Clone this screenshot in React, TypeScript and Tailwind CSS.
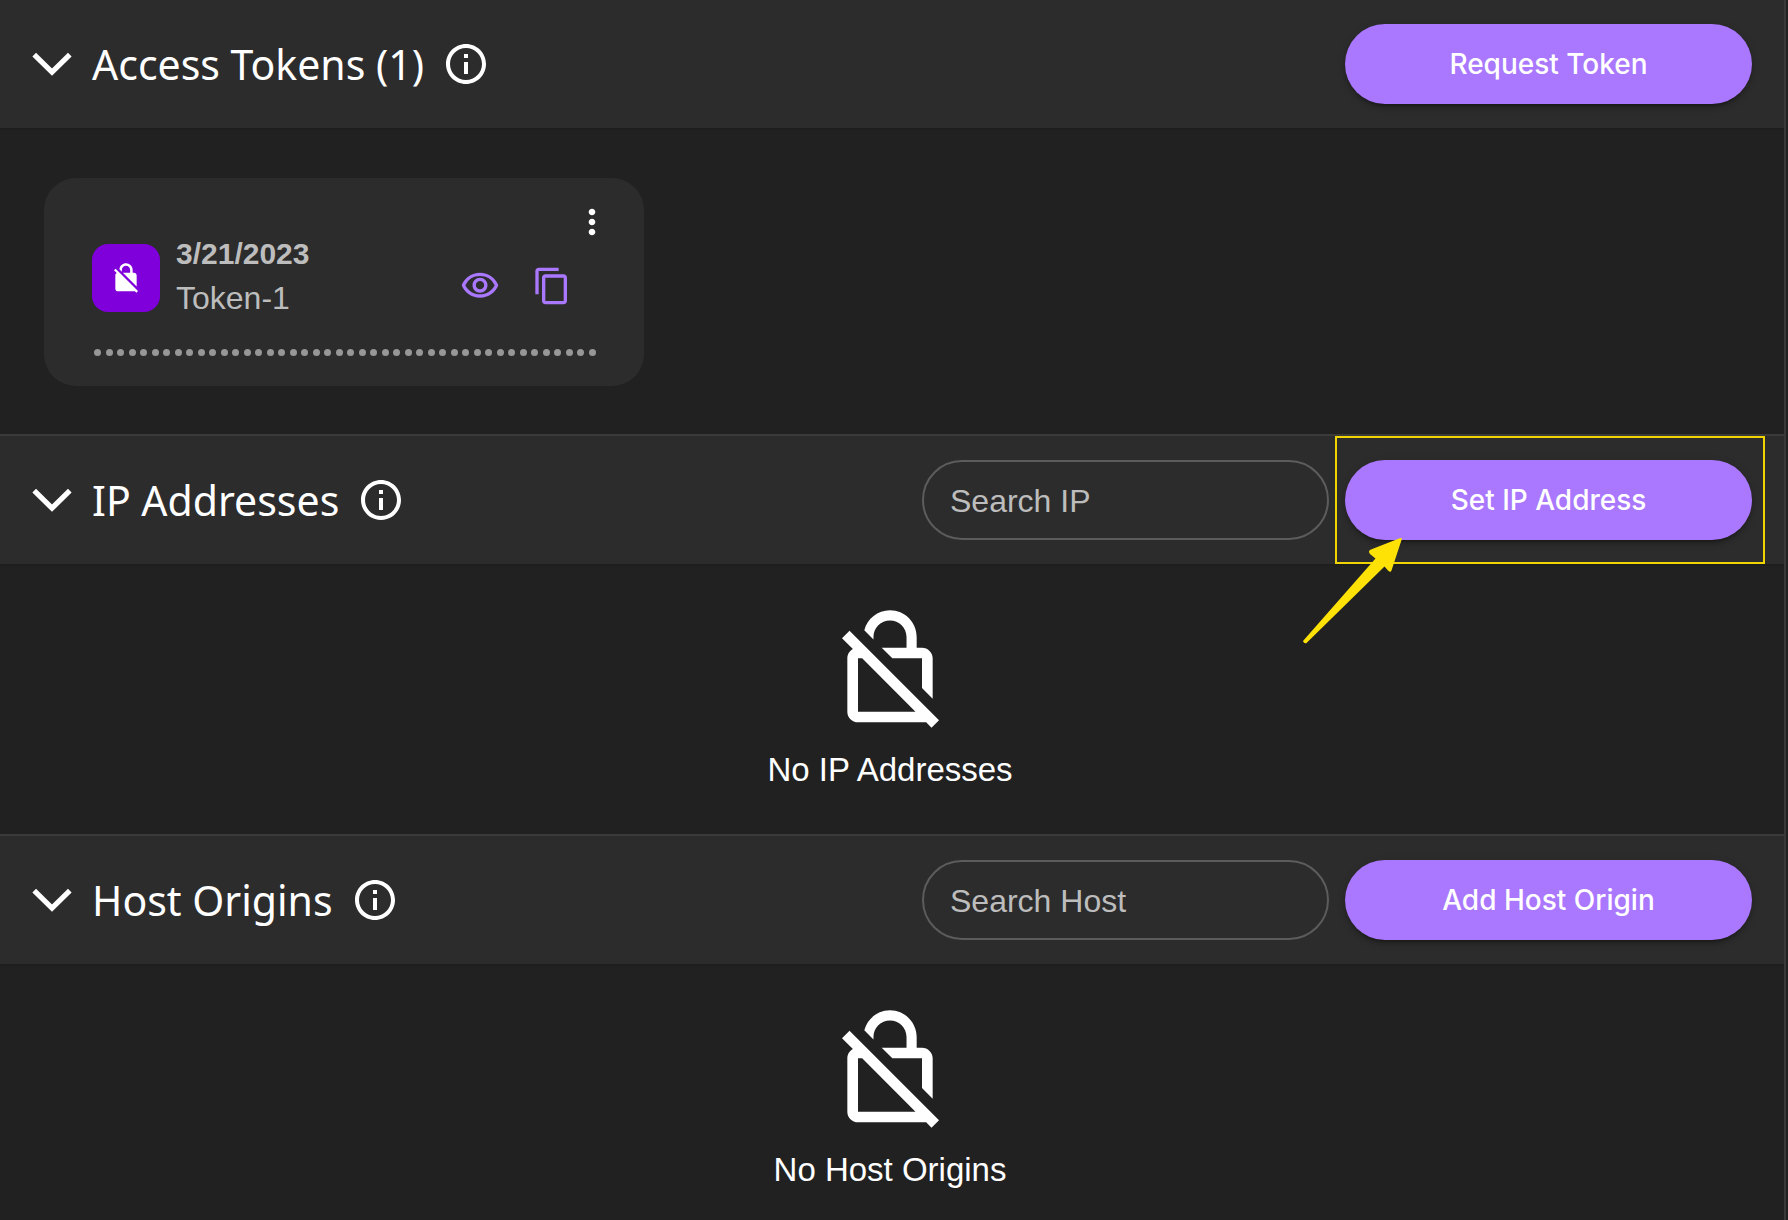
import React from "react";
import {
  MdInfoOutline,
  MdMoreVert,
  MdNoEncryption,
  MdOutlineContentCopy,
  MdOutlineNoEncryption,
  MdOutlineVisibility,
} from "react-icons/md";

const TOKEN_LENGTH = 44;

function Chevron() {
  return (
    <svg viewBox="0 0 40 24" className="h-6 w-10" fill="none" aria-hidden="true">
      <path d="M2.2 2.6 20 20.2 37.8 2.6" stroke="#fff" strokeWidth="5.2" />
    </svg>
  );
}

function PillButton({ children }: { children: React.ReactNode }) {
  return (
    <button
      type="button"
      className="h-20 w-full rounded-full bg-[#aa77ff] font-['Inter',sans-serif] text-[28px] font-medium text-white shadow-[0_6px_2px_-4px_rgba(0,0,0,0.2),0_4px_4px_rgba(0,0,0,0.14),0_2px_10px_rgba(0,0,0,0.12)]"
    >
      {children}
    </button>
  );
}

function Callout() {
  return (
    <>
      <div className="pointer-events-none absolute -top-6 -right-[13px] -bottom-6 -left-2.5 border-2 border-[#f0d503]" />
      <svg
        viewBox="0 0 104 110"
        className="pointer-events-none absolute top-[76px] -left-11 h-[110px] w-[104px]"
        aria-hidden="true"
      >
        <path
          d="M101 2.5 90.5 34.5Q89.5 37 87 34.500L83.500 30.500 5.500 107Q3 108 2 105L74.500 22.500 69 18Q66.500 15 70 13.500L98 2.500Q100.500 1.500 101 2.500Z"
          fill="#ffe205"
        />
      </svg>
    </>
  );
}

function Section({
  title,
  action,
  search,
  highlighted = false,
  first = false,
  children,
}: {
  title: string;
  action: string;
  search?: string;
  highlighted?: boolean;
  first?: boolean;
  children: React.ReactNode;
}) {
  return (
    <section className={first ? "" : "border-t-2 border-[#3a3a3a]"}>
      <header className="flex items-center justify-between gap-4 border-b-2 border-[#1e1e1e] bg-[#2c2c2c] px-8 py-6">
        <div className="flex items-center">
          <button type="button" aria-label={`Collapse ${title}`} className="mr-5">
            <Chevron />
          </button>
          <h2 className="mr-[18px] font-['Noto_Sans',sans-serif] text-[41px] leading-[56px] whitespace-nowrap text-white">
            {title}
          </h2>
          <button type="button" aria-label={`About ${title}`}>
            <MdInfoOutline className="size-12" />
          </button>
        </div>
        <div className="flex gap-4">
          {search && (
            <input
              type="text"
              aria-label={search}
              placeholder={search}
              className="h-20 w-[407px] rounded-full border-2 border-[#5c5c5c] bg-transparent px-[26px] pt-0.5 text-[32px] text-white outline-none placeholder:text-[#bdbdbd]"
            />
          )}
          <div className="relative w-[407px]">
            <PillButton>{action}</PillButton>
            {highlighted && <Callout />}
          </div>
        </div>
      </header>
      {children}
    </section>
  );
}

function EmptyState({ label }: { label: string }) {
  return (
    <div className="flex flex-col items-center gap-[13px] pt-[39px] pr-1 pb-10">
      <MdOutlineNoEncryption className="size-32" />
      <p className="text-[33px] leading-[48px]">{label}</p>
    </div>
  );
}

function TokenCard() {
  return (
    <article className="relative h-[208px] w-[600px] rounded-[32px] bg-[#2c2c2c] px-12 pt-[54px]">
      <button type="button" aria-label="More options" className="absolute top-6 right-8">
        <MdMoreVert className="size-10" />
      </button>
      <div className="flex items-start">
        <div className="mt-3 mr-4 flex size-[68px] items-center justify-center rounded-2xl bg-[#8000dc]">
          <MdNoEncryption className="size-8" />
        </div>
        <div className="flex-1 text-[#bdbdbd]">
          <p className="text-[30px] leading-[44px] font-bold">3/21/2023</p>
          <p className="text-[32px] leading-[44px]">Token-1</p>
        </div>
        <div className="mt-[34px] mr-6 flex gap-8 text-[#aa77ff]">
          <button type="button" aria-label="Show token">
            <MdOutlineVisibility className="size-10" />
          </button>
          <button type="button" aria-label="Copy token">
            <MdOutlineContentCopy className="size-10" />
          </button>
        </div>
      </div>
      <div
        role="img"
        aria-label="Hidden token value"
        className="mt-3 flex h-10 items-center justify-between pl-0.5"
      >
        {Array.from({ length: TOKEN_LENGTH }, (_, i) => (
          <span key={i} className="size-[7px] rounded-full bg-[#979797]" />
        ))}
      </div>
    </article>
  );
}

export default function App() {
  return (
    <main className="min-h-screen bg-[#212121] pr-0.5 font-['Liberation_Sans',Arial,sans-serif] text-white">
      <div className="min-h-screen border-r-2 border-[#3a3a3a]">
        <Section title="Access Tokens (1)" action="Request Token" first>
          <div className="px-11 py-12">
            <TokenCard />
          </div>
        </Section>
        <Section title="IP Addresses" action="Set IP Address" search="Search IP" highlighted>
          <EmptyState label="No IP Addresses" />
        </Section>
        <Section title="Host Origins" action="Add Host Origin" search="Search Host">
          <EmptyState label="No Host Origins" />
        </Section>
      </div>
    </main>
  );
}
